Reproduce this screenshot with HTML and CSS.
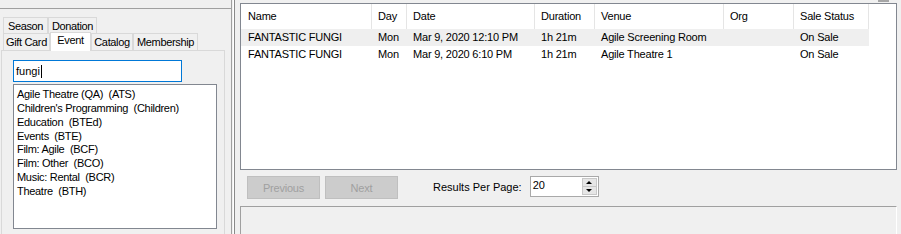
FILE: index.html
```html
<!DOCTYPE html>
<html>
<head>
<meta charset="utf-8">
<link rel="stylesheet" href="styles.css">
</head>
<body>
<div class="app">
  <aside class="left">
    <div class="left-top"></div>
    <div class="tabs">
      <div class="tabrow back">
        <div class="tab t-season">Season</div>
        <div class="tab t-donation">Donation</div>
      </div>
      <div class="tabrow front">
        <div class="tab t-gift">Gift Card</div>
        <div class="tab t-event active">Event</div>
        <div class="tab t-catalog">Catalog</div>
        <div class="tab t-member">Membership</div>
      </div>
      <div class="tabpanel">
        <div class="search"><span class="search-text">fungi</span><span class="caret"></span></div>
        <ul class="listbox">
          <li>Agile Theatre (QA)&nbsp; (ATS)</li>
          <li>Children's Programming&nbsp; (Children)</li>
          <li>Education&nbsp; (BTEd)</li>
          <li>Events&nbsp; (BTE)</li>
          <li>Film: Agile&nbsp; (BCF)</li>
          <li>Film: Other&nbsp; (BCO)</li>
          <li>Music: Rental&nbsp; (BCR)</li>
          <li>Theatre&nbsp; (BTH)</li>
        </ul>
      </div>
    </div>
  </aside>
  <div class="splitter"><div class="split-line"></div></div>
  <main class="right">
    <div class="top-strip"><div class="thumb"></div></div>
    <div class="listview">
      <div class="lv-row lv-header">
        <div class="c c-name">Name</div>
        <div class="c c-day">Day</div>
        <div class="c c-date">Date</div>
        <div class="c c-dur">Duration</div>
        <div class="c c-venue">Venue</div>
        <div class="c c-org">Org</div>
        <div class="c c-status">Sale Status</div>
      </div>
      <div class="lv-row lv-item hot">
        <div class="c c-name">FANTASTIC FUNGI</div>
        <div class="c c-day">Mon</div>
        <div class="c c-date">Mar 9, 2020 12:10 PM</div>
        <div class="c c-dur">1h 21m</div>
        <div class="c c-venue">Agile Screening Room</div>
        <div class="c c-org"></div>
        <div class="c c-status">On Sale</div>
      </div>
      <div class="lv-row lv-item">
        <div class="c c-name">FANTASTIC FUNGI</div>
        <div class="c c-day">Mon</div>
        <div class="c c-date">Mar 9, 2020 6:10 PM</div>
        <div class="c c-dur">1h 21m</div>
        <div class="c c-venue">Agile Theatre 1</div>
        <div class="c c-org"></div>
        <div class="c c-status">On Sale</div>
      </div>
    </div>
    <div class="pager">
      <button class="btn btn-prev" disabled>Previous</button>
      <button class="btn btn-next" disabled>Next</button>
      <span class="rpp-label">Results Per Page:</span>
      <div class="spin">
        <span class="spin-value">20</span>
        <div class="spin-buttons">
          <div class="spin-btn"><span class="arrow up"></span></div>
          <div class="spin-btn"><span class="arrow down"></span></div>
        </div>
      </div>
    </div>
    <div class="bottom-panel"></div>
  </main>
</div>
</body>
</html>
```
FILE: styles.css
```css
* { box-sizing: border-box; }

html, body {
  margin: 0;
  padding: 0;
}

body {
  width: 901px;
  height: 234px;
  overflow: hidden;
  background: #f0f0f0;
  color: #000;
  font-family: "Liberation Sans", Arial, sans-serif;
  font-size: 11px;
}

.app {
  display: flex;
  height: 234px;
  overflow: hidden;
}

/* ---------- left side ---------- */
.left {
  width: 232px;
  flex: none;
  border-right: 1px solid #a0a0a0;
  display: flex;
  flex-direction: column;
  overflow: hidden;
}

.left-top {
  flex: none;
  height: 9px;
  border-bottom: 1px solid #a0a0a0;
}

.tabs {
  flex: none;
  padding-top: 8px;
  padding-left: 1px;
  display: flex;
  flex-direction: column;
}

.tabrow {
  display: flex;
  flex: none;
  padding-left: 2px;
}

.tab {
  flex: none;
  border: 1px solid #d9d9d9;
  border-bottom: none;
  background: #f0f0f0;
  text-align: center;
  white-space: nowrap;
  letter-spacing: -0.35px;
}

.tabrow.back {
  height: 16px;
}

.tabrow.back .tab {
  height: 16px;
  line-height: 17px;
}

.t-season { width: 45px; }
.t-donation { width: 49px; }

.tabrow.front {
  height: 17px;
  align-items: flex-end;
  position: relative;
  z-index: 1;
}

.tabrow.front .tab {
  height: 17px;
  line-height: 17px;
}

.tabrow.front .tab.active {
  height: 19px;
  line-height: 15px;
  margin-bottom: -1px;
  background: #ffffff;
  border-color: #d9d9d9;
}

.t-gift { width: 47px; }
.t-event { width: 41px; }
.t-catalog { width: 42px; }
.t-member { width: 65px; }

.tabpanel {
  flex: none;
  width: 224px;
  height: 190px;
  border: 1px solid #d9d9d9;
  background: #f0f0f0;
  padding: 9px 0 0 11px;
}

.search {
  width: 169px;
  height: 22px;
  border: 1px solid #0078d7;
  background: #fff;
  padding-left: 2px;
  display: flex;
  align-items: center;
}

.caret {
  display: inline-block;
  width: 1px;
  height: 13px;
  background: #000;
  margin-left: 1px;
}

.listbox {
  list-style: none;
  margin: 2px 0 0 0;
  padding: 2px 0 0 3px;
  width: 204px;
  height: 145px;
  border: 1px solid #828790;
  background: #fff;
  letter-spacing: -0.3px;
}

.listbox li {
  height: 13.86px;
  line-height: 14px;
  white-space: nowrap;
}

/* ---------- splitter ---------- */
.splitter {
  width: 8px;
  flex: none;
  display: flex;
  padding-left: 1px;
}

.split-line {
  width: 2px;
  border-left: 1px solid #ffffff;
  border-right: 1px solid #8a8a8a;
}

/* ---------- right side ---------- */
.right {
  flex: 1;
  display: flex;
  flex-direction: column;
}

.top-strip {
  flex: none;
  height: 3px;
  display: flex;
}

.thumb {
  width: 11px;
  height: 2px;
  margin-left: 638px;
  background: #a6a6a6;
}

.listview {
  flex: none;
  width: 657px;
  height: 167px;
  border: 1px solid #828790;
  background: #fff;
  letter-spacing: -0.2px;
}

.lv-row {
  display: flex;
}

.c {
  padding-left: 6px;
  white-space: nowrap;
  overflow: hidden;
  flex: none;
}

.c-name { width: 131px; }
.c-day { width: 35px; }
.c-date { width: 128px; }
.c-dur { width: 60px; }
.c-venue { width: 129px; }
.c-org { width: 70px; }
.c-status { width: 75px; }

.lv-header {
  height: 25px;
  align-items: stretch;
}

.lv-header .c {
  border-right: 1px solid #e5e5e5;
  line-height: 24px;
}

.lv-header .c-name { padding-left: 7px; }

.lv-item {
  height: 17px;
  line-height: 17px;
  width: 628px;
}

.lv-item .c-name { padding-left: 7px; }

.lv-item.hot {
  background: #efefef;
}

.pager {
  flex: none;
  margin-top: 6px;
  height: 23px;
  display: flex;
  align-items: flex-start;
  padding-left: 7px;
}

.btn {
  width: 73px;
  height: 23px;
  background: #cccccc;
  border: 1px solid #bfbfbf;
  color: #a0a0a0;
  font-family: "Liberation Sans", Arial, sans-serif;
  font-size: 11px;
  letter-spacing: -0.2px;
  padding: 0;
  margin: 0;
}

.btn-next { margin-left: 5px; }

.rpp-label {
  margin-left: 35px;
  line-height: 22px;
  white-space: nowrap;
}

.spin {
  margin-left: 8px;
  width: 69px;
  height: 21px;
  border: 1px solid #a9a9a9;
  background: #fff;
  display: flex;
  justify-content: space-between;
}

.spin-value {
  padding-left: 2px;
  line-height: 17px;
}

.spin-buttons {
  width: 16px;
  display: flex;
  flex-direction: column;
  padding: 1px 1px 1px 0;
}

.spin-btn {
  flex: 1;
  background: #e6e6e6;
  border: 1px solid #c8c8c8;
  display: flex;
  align-items: center;
  justify-content: center;
}

.spin-btn + .spin-btn { border-top: none; }

.arrow {
  width: 0;
  height: 0;
  border-left: 3px solid transparent;
  border-right: 3px solid transparent;
}

.arrow.up { border-bottom: 3px solid #000; }
.arrow.down { border-top: 3px solid #000; }

.bottom-panel {
  margin-top: 7px;
  width: 657px;
  flex: 1;
  border-top: 1px solid #a0a0a0;
  border-left: 1px solid #a0a0a0;
  border-right: 1px solid #ffffff;
}
```
